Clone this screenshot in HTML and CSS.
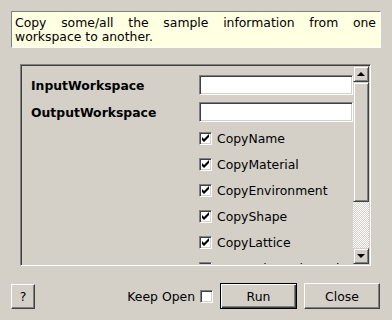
FILE: index.html
```html
<!DOCTYPE html>
<html lang="en">
<head>
    <meta charset="UTF-8">
    <meta name="viewport" content="width=device-width, initial-scale=1.0">
    <title>CopySample</title>
    <link rel="stylesheet" href="styles.css">
</head>
<body>
    <div class="dialog">
        <div class="description">Copy some/all the sample information from one workspace to another.</div>

        <div class="frame">
            <div class="viewport">
                <div class="form">
                    <div class="label">InputWorkspace</div>
                    <div class="field"><div class="input"></div></div>
                    <div class="label">OutputWorkspace</div>
                    <div class="field"><div class="input"></div></div>

                    <div class="field check-row"><span class="checkbox checked"></span>CopyName</div>
                    <div class="field check-row"><span class="checkbox checked"></span>CopyMaterial</div>
                    <div class="field check-row"><span class="checkbox checked"></span>CopyEnvironment</div>
                    <div class="field check-row"><span class="checkbox checked"></span>CopyShape</div>
                    <div class="field check-row"><span class="checkbox checked"></span>CopyLattice</div>
                    <div class="field check-row"><span class="checkbox checked"></span>CopyOrientationOnly</div>
                </div>
            </div>
            <div class="scrollbar">
                <div class="arrow-btn"><span class="tri up"></span></div>
                <div class="thumb"></div>
                <div class="trough"></div>
                <div class="arrow-btn"><span class="tri down"></span></div>
            </div>
        </div>

        <div class="button-bar">
            <button class="btn help">?</button>
            <div class="spacer"></div>
            <label class="keep-open">Keep Open <span class="checkbox"></span></label>
            <button class="btn default">Run</button>
            <button class="btn close">Close</button>
        </div>
    </div>
</body>
</html>
```

FILE: styles.css
```css
/* Base styling */
body {
    margin: 0;
    padding: 0;
    background-color: #d4d0c8;
    font-family: 'DejaVu Sans', 'Liberation Sans', sans-serif;
    font-size: 12.4px;
    color: #000;
}

.dialog {
    width: 392px;
    height: 320px;
    box-sizing: border-box;
    padding: 11px;
    display: flex;
    flex-direction: column;
}

/* Description box */
.description {
    height: 37px;
    box-sizing: border-box;
    padding: 4px 4px 3px 3px;
    background-color: #ffffe1;
    border: 1px solid;
    border-color: #808080 #fff #fff #808080;
    line-height: 14px;
    text-align: justify;
    margin-bottom: 16px;
}

/* Scroll area */
.frame {
    height: 202px;
    box-sizing: border-box;
    margin: 0 10px 0 9px;
    border: 1px solid;
    border-color: #808080 #fff #fff #808080;
    box-shadow: inset 1px 1px #404040, inset -1px -1px #d4d0c8;
    padding: 1px;
    display: flex;
}

.viewport {
    flex: 1;
    overflow: hidden;
    padding: 9px 0 0 9px;
}

.form {
    display: grid;
    grid-template-columns: 168px 1fr;
    grid-template-rows: 21px;
    grid-auto-rows: 20px;
    row-gap: 6px;
}

.label {
    grid-column: 1;
    font-weight: bold;
    display: flex;
    align-items: center;
}

.field {
    grid-column: 2;
    display: flex;
    align-items: center;
}

.input {
    width: 100%;
    height: 20px;
    box-sizing: border-box;
    background-color: #fff;
    border: 1px solid;
    border-color: #808080 #fff #fff #808080;
    box-shadow: inset 1px 1px #404040, inset -1px -1px #d4d0c8;
    align-self: flex-start;
}

.check-row {
    gap: 5px;
    white-space: nowrap;
}

.checkbox {
    display: inline-block;
    width: 13px;
    height: 13px;
    box-sizing: border-box;
    flex-shrink: 0;
    background-color: #fff;
    border: 1px solid;
    border-color: #808080 #fff #fff #808080;
    box-shadow: inset 1px 1px #404040, inset -1px -1px #d4d0c8;
}

.checkbox.checked {
    background: #fff url("data:image/svg+xml,%3Csvg xmlns='http://www.w3.org/2000/svg' width='11' height='11'%3E%3Cpath d='M2 4v3l2 2 5-5V1L4 6z' fill='%23000'/%3E%3C/svg%3E") no-repeat center;
}

/* Scrollbar */
.scrollbar {
    width: 16px;
    display: flex;
    flex-direction: column;
}

.arrow-btn, .thumb {
    box-sizing: border-box;
    background-color: #d4d0c8;
    border: 1px solid;
    border-color: #d4d0c8 #404040 #404040 #d4d0c8;
    box-shadow: inset 1px 1px #fff, inset -1px -1px #808080;
}

.arrow-btn {
    height: 16px;
    display: flex;
    align-items: center;
    justify-content: center;
}

.tri {
    width: 0;
    height: 0;
    border-left: 4px solid transparent;
    border-right: 4px solid transparent;
}

.tri.up {
    border-bottom: 4px solid #000;
}

.tri.down {
    border-top: 4px solid #000;
}

.thumb {
    height: 120px;
}

.trough {
    flex: 1;
    background: repeating-conic-gradient(#fff 0 25%, #d4d0c8 0 50%) 0 0 / 2px 2px;
}

/* Bottom buttons */
.button-bar {
    margin-top: 17px;
    display: flex;
    align-items: center;
    height: 26px;
    padding-right: 1px;
}

.spacer {
    flex: 1;
}

.btn {
    font-family: inherit;
    font-size: 12.4px;
    color: #000;
    height: 26px;
    width: 77px;
    padding: 0;
    margin-left: 7px;
    background-color: #d4d0c8;
    border: 1px solid;
    border-color: #fff #404040 #404040 #fff;
    box-shadow: inset -1px -1px #808080;
}

.btn.close {
    width: 76px;
}

.btn.help {
    width: 24px;
    height: 25px;
    margin-left: 0;
}

.btn.default {
    border: 1px solid #000;
    box-shadow: inset 1px 1px #fff, inset -1px -1px #404040, inset -2px -2px #808080;
}

.keep-open {
    display: flex;
    align-items: center;
    gap: 5px;
}
```
